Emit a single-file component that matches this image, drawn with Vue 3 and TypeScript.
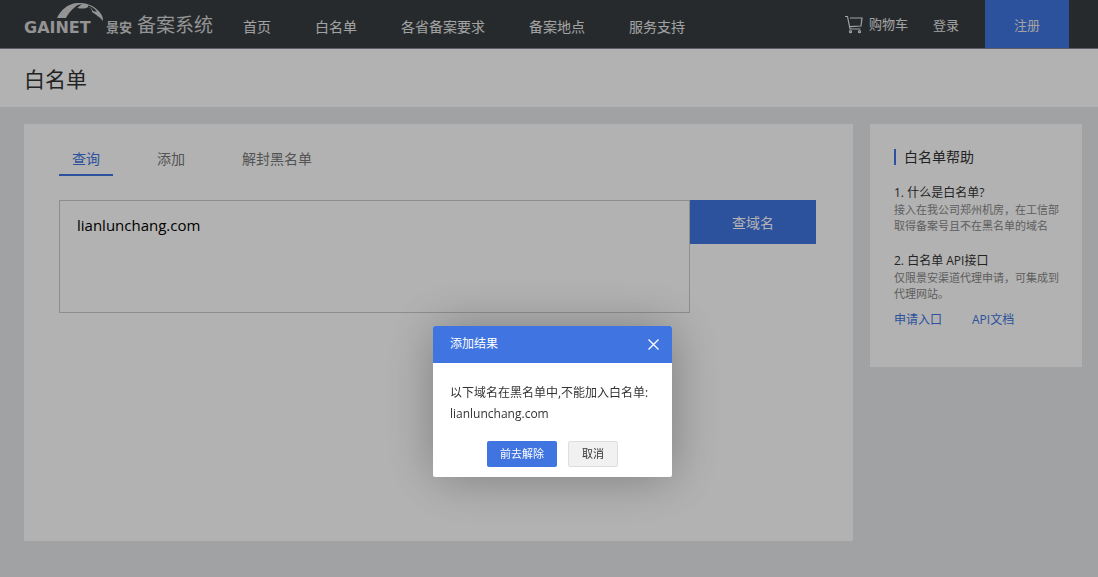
<script setup lang="ts">
import { ref } from 'vue'

const navItems: string[] = ['首页', '白名单', '各省备案要求', '备案地点', '服务支持']
const tabs: string[] = ['查询', '添加', '解封黑名单']
const activeTab = ref<string>('查询')
const domains = ref<string>('lianlunchang.com')
const dialogOpen = ref<boolean>(true)
</script>

<template>
  <div class="page">
    <header class="topbar">
      <a class="logo" href="#" aria-label="GAINET 景安 备案系统">
        <span class="brand">
          <svg class="mark" width="48" height="18" viewBox="0 0 48 18" aria-hidden="true">
            <path d="M0 15 C4 7 10 1 20 0 C28 -0.500 38 2 44 11 C46 14 46 16 46 18 C43 14 39 12 35 9 C35 6 34 5 31 4 C28 6 23 6 18 4 C14 7 11 11 9 15 Z" />
            <path class="notch" d="M18 4 C20 2 22 1.500 25 1.500 C23 2.500 21 4 20 5.500 Z M31 2.500 C35 3.500 38 6 40 9 L36 8 C35 5.500 34 4.500 31 4 Z" />
          </svg>
          <span class="words"><span class="latin">GAINET</span><span class="cn">景安</span></span>
        </span>
        <span class="system">备案系统</span>
      </a>
      <nav class="nav">
        <a v-for="item in navItems" :key="item" href="#">{{ item }}</a>
      </nav>
      <div class="account">
        <a class="cart" href="#">
          <svg width="18" height="19" viewBox="0 0 18 19" fill="none" stroke="currentColor" stroke-width="1.2" aria-hidden="true">
            <path d="M0 1.500 H2.500 L5 14 H15.500" />
            <path d="M5 3 H17 L16 11 L5 11.700" />
            <circle cx="5.500" cy="16.700" r="1" />
            <circle cx="14.500" cy="16.700" r="1" />
          </svg>
          购物车
        </a>
        <a class="login" href="#">登录</a>
        <a class="register" href="#">注册</a>
      </div>
    </header>

    <div class="titlebar"><h1>白名单</h1></div>

    <div class="content">
      <main class="panel">
        <div class="tabs" role="tablist">
          <button
            v-for="tab in tabs"
            :key="tab"
            type="button"
            role="tab"
            :aria-selected="tab === activeTab"
            :class="{ active: tab === activeTab }"
            @click="activeTab = tab"
          >{{ tab }}</button>
        </div>
        <form class="query" @submit.prevent>
          <textarea v-model="domains" aria-label="域名" spellcheck="false"></textarea>
          <button type="submit">查域名</button>
        </form>
      </main>

      <aside class="help">
        <h2>白名单帮助</h2>
        <h3>1. 什么是白名单?</h3>
        <p>接入在我公司郑州机房，在工信部<br />取得备案号且不在黑名单的域名</p>
        <h3>2. 白名单 API接口</h3>
        <p>仅限景安渠道代理申请，可集成到<br />代理网站。</p>
        <div class="links">
          <a href="#">申请入口</a>
          <a href="#">API文档</a>
        </div>
      </aside>
    </div>

    <div v-if="dialogOpen" class="shade">
      <section class="dialog" role="dialog" aria-modal="true" aria-labelledby="dialog-title">
        <div class="dialog-head">
          <h2 id="dialog-title">添加结果</h2>
          <button type="button" aria-label="关闭" @click="dialogOpen = false">
            <svg width="11" height="11" viewBox="0 0 11 11" stroke="currentColor" stroke-width="1.3" aria-hidden="true">
              <path d="M0.500 0.500 L10.500 10.500 M10.500 0.500 L0.500 10.500" />
            </svg>
          </button>
        </div>
        <p>以下域名在黑名单中,不能加入白名单:<br />lianlunchang.com</p>
        <div class="actions">
          <button type="button" class="primary" @click="dialogOpen = false">前去解除</button>
          <button type="button" class="cancel" @click="dialogOpen = false">取消</button>
        </div>
      </section>
    </div>
  </div>
</template>

<style>
body {
  margin: 0;
  background: #e6e8ea;
}
</style>

<style scoped>
* {
  box-sizing: border-box;
}
.page {
  min-height: 100vh;
  font-family: "Open Sans", "Noto Sans CJK SC", sans-serif;
  font-size: 14px;
  line-height: 20px;
  color: #333;
}
h1, h2, h3, p {
  margin: 0;
  font-weight: 400;
}
a {
  color: inherit;
  text-decoration: none;
}
button {
  padding: 0;
  border: 0;
  background: none;
  font: inherit;
  color: inherit;
  cursor: pointer;
}
.topbar {
  display: flex;
  height: 49px;
  padding: 0 29px 0 24px;
  background: #373d41;
  border-bottom: 1px solid #84869a;
  color: #e8e8e8;
}
.logo {
  display: flex;
  width: 219px;
  gap: 5px;
  color: #d4d4d4;
}
.brand {
  width: 108px;
  padding-top: 3px;
}
.mark {
  display: block;
  margin-left: 33px;
  fill: currentColor;
}
.notch {
  fill: #373d41;
}
.words {
  display: flex;
  justify-content: space-between;
  align-items: flex-end;
  line-height: 13px;
}
.latin {
  font-family: "DejaVu Sans", sans-serif;
  font-size: 16px;
  font-weight: 700;
}
.cn {
  font-size: 13px;
  font-weight: 700;
}
.system {
  font-size: 19px;
  line-height: 51px;
}
.nav {
  display: flex;
  gap: 44px;
  line-height: 53px;
  white-space: nowrap;
}
.account {
  display: flex;
  margin-left: auto;
  font-size: 13px;
  line-height: 51px;
  white-space: nowrap;
}
.cart {
  display: flex;
  align-items: center;
  gap: 6px;
  margin-right: 25px;
}
.login {
  margin-right: 26px;
}
.register {
  width: 84px;
  background: #4074e1;
  text-align: center;
}
.titlebar {
  height: 58px;
  padding: 0 24px;
  background: #fff;
}
h1 {
  font-size: 21px;
  line-height: 60px;
}
.content {
  display: flex;
  align-items: flex-start;
  gap: 17px;
  padding: 17px 16px 36px 24px;
}
.panel {
  flex: 1;
  min-height: 417px;
  padding: 20px 37px 36px 35px;
  background: #fff;
}
.tabs {
  display: flex;
  gap: 31px;
  margin-bottom: 24px;
  color: #777;
}
.tabs button {
  height: 32px;
  padding: 0 13px;
  border-bottom: 2px solid transparent;
}
.tabs .active {
  border-color: #4074e1;
  color: #4074e1;
}
.query {
  display: flex;
  align-items: flex-start;
}
textarea {
  flex: 1;
  height: 113px;
  padding: 13px 17px;
  border: 1px solid #ccc;
  border-radius: 0;
  background: #fff;
  color: #000;
  font: inherit;
  font-size: 15px;
  line-height: 22px;
  resize: none;
  outline: none;
}
.query button {
  width: 126px;
  height: 44px;
  padding-top: 2px;
  background: #4074e1;
  color: #fff;
}
.help {
  width: 212px;
  min-height: 243px;
  padding: 25px 20px 36px 24px;
  background: #fff;
  white-space: nowrap;
}
.help h2 {
  padding-left: 8px;
  border-left: 2px solid #4074e1;
  font-size: 14px;
  line-height: 16px;
}
.help h3 {
  margin-top: 18px;
  font-size: 12px;
  line-height: 19px;
}
.help h3 + p + h3 {
  margin-top: 17px;
}
.help p {
  color: #888;
  font-size: 11px;
  line-height: 16px;
}
.links {
  display: flex;
  gap: 30px;
  margin-top: 8px;
  color: #4074e1;
  font-size: 12px;
}
.shade {
  position: fixed;
  inset: 0;
  display: flex;
  align-items: center;
  justify-content: center;
  padding: 225px 0 0 7px;
  background: rgba(0, 0, 0, 0.3);
}
.dialog {
  width: 239px;
  border-radius: 2px;
  background: #fff;
  box-shadow: 1px 1px 50px rgba(0, 0, 0, 0.3);
  font-size: 12px;
  white-space: nowrap;
}
.dialog-head {
  display: flex;
  align-items: center;
  justify-content: space-between;
  height: 37px;
  padding: 0 13px 0 17px;
  border-radius: 2px 2px 0 0;
  background: #4074e1;
  color: #fff;
}
.dialog-head h2 {
  font-size: 12px;
  line-height: 20px;
}
.dialog-head svg {
  display: block;
}
.dialog p {
  padding: 19px 17px 17px;
  line-height: 21px;
}
.actions {
  display: flex;
  justify-content: center;
  gap: 11px;
  padding-bottom: 10px;
  font-size: 11px;
}
.actions button {
  height: 26px;
  border-radius: 2px;
}
.primary {
  width: 70px;
  background: #4074e1;
  color: #fff;
}
.cancel {
  width: 50px;
  border: 1px solid #dedede;
  background: #f1f1f1;
}
</style>
